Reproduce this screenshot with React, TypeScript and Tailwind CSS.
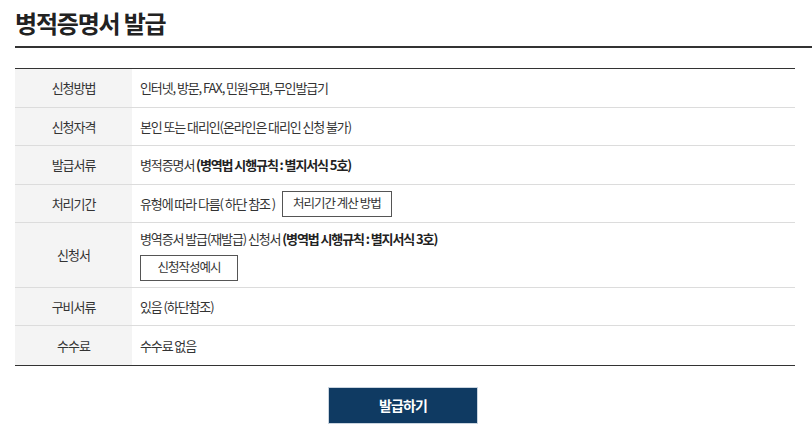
import React from "react";

type Row = {
  label: string;
  h: string;
  content: React.ReactNode;
};

const rows: Row[] = [
  { label: "신청방법", h: "h-[39px]", content: <span>인터넷, 방문, FAX, 민원우편, 무인발급기</span> },
  { label: "신청자격", h: "h-[38px]", content: <span>본인 또는 대리인(온라인은 대리인 신청 불가)</span> },
  {
    label: "발급서류",
    h: "h-[39px]",
    content: (
      <span>
        병적증명서 <b className="font-bold text-[#222]">(병역법 시행규칙 : 별지서식 5호)</b>
      </span>
    ),
  },
  {
    label: "처리기간",
    h: "h-[38px]",
    content: (
      <div className="flex items-center gap-[7px]">
        <span>유형에 따라 다름( 하단 참조 )</span>
        <button className="h-[26px] border border-[#555] bg-white px-[10px] text-[12.5px] tracking-[-0.08em] text-[#333]">
          처리기간 계산 방법
        </button>
      </div>
    ),
  },
  {
    label: "신청서",
    h: "h-[65px]",
    content: (
      <div className="flex flex-col items-start gap-[6px]">
        <span>
          병역증서 발급(재발급) 신청서 <b className="font-bold text-[#222]">(병역법 시행규칙 : 별지서식 3호)</b>
        </span>
        <button className="h-[26px] w-[98px] border border-[#555] bg-white text-[12.5px] tracking-[-0.08em] text-[#333]">
          신청작성예시
        </button>
      </div>
    ),
  },
  { label: "구비서류", h: "h-[38px]", content: <span>있음 (하단참조)</span> },
  { label: "수수료", h: "h-[39px]", content: <span>수수료 없음</span> },
];

export default function App() {
  return (
    <div
      className="min-h-[435px] bg-white pl-[15px] pt-[7px] text-[#333]"
      style={{ fontFamily: '"Noto Sans CJK KR", "Noto Sans", sans-serif' }}
    >
      <div className="border-b-2 border-[#333]">
        <h1 className="pb-[7px] text-[24px] font-bold leading-[32px] tracking-[-0.05em] text-[#222]">
          병적증명서 발급
        </h1>
      </div>

      <div className="mt-[20px] w-[780px]">
        <div className="border-t border-b border-[#333]">
          {rows.map((row, i) => (
            <div
              key={row.label}
              className={`flex ${i < rows.length - 1 ? "border-b border-[#dcdcdc]" : ""} ${row.h}`}
            >
              <div className="flex w-[117px] shrink-0 items-center justify-center bg-[#f4f4f4] text-[13px] tracking-[-0.08em]">
                {row.label}
              </div>
              <div className="flex flex-1 items-center pl-[8px] text-[13px] tracking-[-0.085em]">
                {row.content}
              </div>
            </div>
          ))}
        </div>

        <div className="mt-[21px] flex justify-center pr-[4px]">
          <button className="h-[37px] w-[150px] border border-[#c9d4df] bg-[#0f3a62] text-[14px] font-bold tracking-[-0.06em] text-white">
            발급하기
          </button>
        </div>
      </div>
    </div>
  );
}
